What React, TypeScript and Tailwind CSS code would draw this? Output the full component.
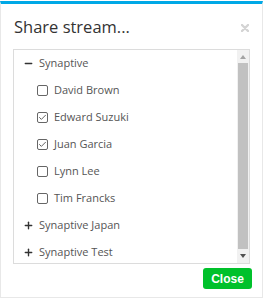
import { Check, Minus, Plus } from "lucide-react";

type Row = {
  label: string;
  kind: "group-open" | "group-closed" | "member";
  checked?: boolean;
};

const ROWS: Row[] = [
  { label: "Synaptive", kind: "group-open" },
  { label: "David Brown", kind: "member" },
  { label: "Edward Suzuki", kind: "member", checked: true },
  { label: "Juan Garcia", kind: "member", checked: true },
  { label: "Lynn Lee", kind: "member" },
  { label: "Tim Francks", kind: "member" },
  { label: "Synaptive Japan", kind: "group-closed" },
  { label: "Synaptive Test", kind: "group-closed" },
];

function TreeRow({ row }: { row: Row }) {
  if (row.kind === "member") {
    return (
      <div className="flex h-[27px] shrink-0 items-center pl-[23px]">
        <span className="flex h-[11px] w-[11px] items-center justify-center rounded-[2px] border border-[#666]">
          {row.checked ? <Check size={9} strokeWidth={2.2} className="text-[#444]" /> : null}
        </span>
        <span className="ml-[6px] text-[#555]">{row.label}</span>
      </div>
    );
  }
  return (
    <div className="flex h-[27px] shrink-0 items-center pl-[9px]">
      {row.kind === "group-open" ? (
        <Minus size={11} strokeWidth={3} className="text-[#333]" />
      ) : (
        <Plus size={11} strokeWidth={3} className="text-[#333]" />
      )}
      <span className="ml-[5px] text-[#555]">{row.label}</span>
    </div>
  );
}

export default function App() {
  return (
    <div className="mt-px flex h-[297px] w-[263px] flex-col border-x border-b border-t-[3px] border-x-[#e8e8e8] border-b-[#e8e8e8] border-t-[#00a8e6] bg-white font-['Open_Sans',sans-serif]">
      <div className="flex h-[45px] items-center justify-between pl-[13px] pr-[13px] pt-[2px]">
        <h2 className="text-[16.5px] leading-none text-[#333]">Share stream...</h2>
        <svg width="8" height="8" viewBox="0 0 8 8" aria-hidden="true">
          <path d="M1 1 L7 7 M7 1 L1 7" stroke="#d4d4d4" strokeWidth="2.4" strokeLinecap="round" />
        </svg>
      </div>

      <div className="mx-[12px] flex h-[215px] border border-[#dcdcdc]">
        <div className="flex min-w-0 flex-1 flex-col overflow-hidden text-[11px]">
          {ROWS.map((row) => (
            <TreeRow key={row.label} row={row} />
          ))}
        </div>
        <div className="flex w-[12px] flex-col bg-[#f1f1f1]">
          <div className="flex h-[13px] items-center justify-center">
            <svg width="6" height="4" viewBox="0 0 6 4" aria-hidden="true">
              <path d="M3 0 L6 4 L0 4 Z" fill="#a3a3a3" />
            </svg>
          </div>
          <div className="mx-px flex-1 bg-[#c1c1c1]" />
          <div className="flex h-[14px] items-center justify-center">
            <svg width="6" height="4" viewBox="0 0 6 4" aria-hidden="true">
              <path d="M0 0 L6 0 L3 4 Z" fill="#505050" />
            </svg>
          </div>
        </div>
      </div>

      <div className="flex justify-end pr-[10px] pt-[4px]">
        <button
          type="button"
          className="h-[21px] w-[49px] rounded-[3px] bg-[#00c12b] font-['Liberation_Sans',sans-serif] text-[12px] font-bold text-white"
        >
          Close
        </button>
      </div>
    </div>
  );
}
